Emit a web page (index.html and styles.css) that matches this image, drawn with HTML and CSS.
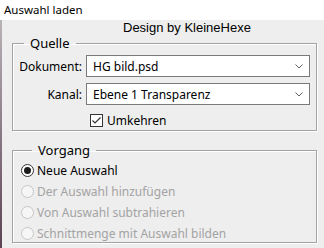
FILE: index.html
```html
<!DOCTYPE html>
<html lang="de">
<head>
  <meta charset="UTF-8">
  <title>Auswahl laden</title>
  <link rel="stylesheet" href="styles.css">
</head>
<body>
  <!-- Titelleiste -->
  <div class="titlebar">Auswahl laden</div>

  <div class="dialog">
    <div class="credit">Design by KleineHexe</div>

    <!-- Quelle -->
    <fieldset class="group source">
      <legend>Quelle</legend>
      <div class="field">
        <span class="label">Dokument:</span>
        <div class="select">
          <span>HG bild.psd</span>
          <svg width="8" height="5" viewBox="0 0 8 5"><polyline points="0.5,0.5 4,4 7.5,0.5" fill="none" stroke="#606060" stroke-width="1"/></svg>
        </div>
      </div>
      <div class="field">
        <span class="label">Kanal:</span>
        <div class="select">
          <span>Ebene 1 Transparenz</span>
          <svg width="8" height="5" viewBox="0 0 8 5"><polyline points="0.5,0.5 4,4 7.5,0.5" fill="none" stroke="#606060" stroke-width="1"/></svg>
        </div>
      </div>
      <div class="check">
        <span class="box">
          <svg width="11" height="11" viewBox="0 0 11 11"><polyline points="1.5,5.5 4,8 9.5,2.5" fill="none" stroke="#333" stroke-width="1.2"/></svg>
        </span>
        Umkehren
      </div>
    </fieldset>

    <!-- Vorgang -->
    <fieldset class="group operation">
      <legend>Vorgang</legend>
      <div class="radio checked"><span class="dot"></span>Neue Auswahl</div>
      <div class="radio disabled"><span class="dot"></span>Der Auswahl hinzufügen</div>
      <div class="radio disabled"><span class="dot"></span>Von Auswahl subtrahieren</div>
      <div class="radio disabled"><span class="dot"></span>Schnittmenge mit Auswahl bilden</div>
    </fieldset>
  </div>
</body>
</html>
```

FILE: styles.css
```css
html, body {
  margin: 0;
  padding: 0;
  width: 324px;
  height: 248px;
  overflow: hidden;
  background: #eeeeee;
  color: #000000;
  font-family: "Noto Sans", sans-serif;
  font-size: 12px;
}

/* Titelleiste */
.titlebar {
  height: 20px;
  line-height: 20px;
  padding-left: 4px;
  background: #ffffff;
  font-size: 11.5px;
}

.dialog {
  height: 228px;
  border-left: 2px solid;
  border-image: linear-gradient(#b9b2b7, #5b4252) 1;
  padding: 0 7px 0 10px;
}

.credit {
  height: 15px;
  line-height: 15px;
  padding-left: 111px;
  font-family: "Liberation Sans", sans-serif;
  font-size: 13px;
}

/* Gruppenrahmen */
.group {
  margin: 0;
  padding: 0 6px 1px 0;
  border: 1px solid #a3a3a3;
  box-shadow: inset 1px 1px 0 #ffffff, 1px 1px 0 #ffffff;
  min-width: 0;
}
.group legend {
  margin-left: 11px;
  padding: 0 6px;
  font-size: 13px;
  line-height: 16px;
}

.source {
  display: flex;
  flex-direction: column;
  gap: 6px;
}
.field {
  display: grid;
  grid-template-columns: 69px 1fr;
  column-gap: 4px;
  align-items: center;
}
.field:first-of-type {
  margin-top: 4px;
}
.label {
  text-align: right;
}
.select {
  height: 20px;
  border: 1px solid #7a7a7a;
  background: #ffffff;
  display: flex;
  align-items: center;
  justify-content: space-between;
  padding: 0 6px 0 6px;
}

.check {
  display: flex;
  align-items: center;
  gap: 4px;
  margin-left: 77px;
  height: 18px;
}
.box {
  width: 11px;
  height: 11px;
  border: 1px solid #333333;
  background: #ffffff;
  display: flex;
}

/* Vorgang */
.operation {
  margin-top: 11px;
  padding: 4px 0 0 8px;
  display: flex;
  flex-direction: column;
  gap: 5.33px;
}
.radio {
  display: flex;
  align-items: center;
  gap: 3px;
  height: 16px;
}
.radio .dot {
  width: 11px;
  height: 11px;
  border: 1px solid #c6c6c6;
  border-radius: 50%;
  background: #f6f6f6;
  display: flex;
  align-items: center;
  justify-content: center;
}
.radio.checked .dot {
  border-color: #333333;
  background: #ffffff;
}
.radio.checked .dot::after {
  content: "";
  width: 7px;
  height: 7px;
  border-radius: 50%;
  background: #1a1a1a;
}
.radio.disabled {
  color: #a3a3a3;
}
```
